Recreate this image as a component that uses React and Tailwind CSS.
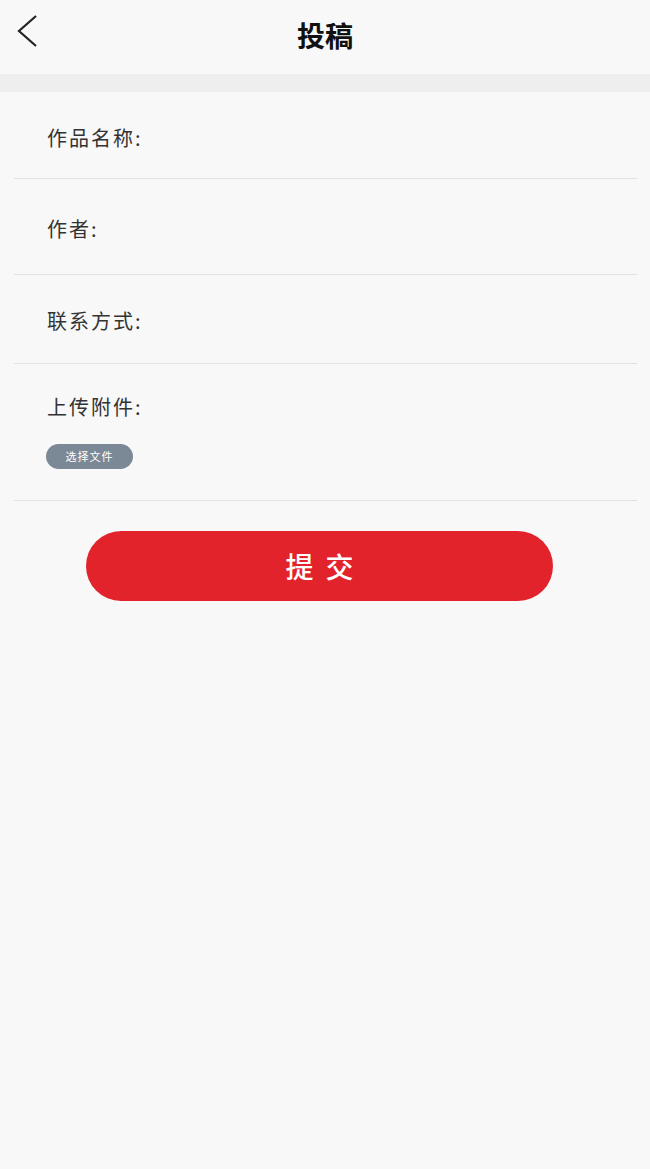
export default function App() {
  const font = { fontFamily: '"Noto Sans CJK SC", "Noto Sans", sans-serif' };
  return (
    <div className="min-h-[1169px] w-[650px] bg-[#f8f8f8]" style={font}>
      <div className="relative flex h-[74px] items-center justify-center pb-[4px]">
        <svg className="absolute left-[14px] top-[12px]" width="28" height="38" viewBox="0 0 28 38">
          <path d="M22 4 L5 19 L22 34" fill="none" stroke="#222" strokeWidth="2.2" />
        </svg>
        <h1 className="text-[28px] font-bold leading-none text-[#111]">投稿</h1>
      </div>
      <div className="h-[18px] bg-[#eeeeee]" />
      <div className="mx-[14px] mr-[13px]">
        <div className="flex h-[87px] items-end border-b border-[#e2e2e2] pb-[25px] pl-[33px]">
          <span className="text-[20px] leading-[30px] tracking-[2px] text-[#333]">作品名称:</span>
        </div>
        <div className="flex h-[96px] items-end border-b border-[#e2e2e2] pb-[30px] pl-[33px]">
          <span className="text-[20px] leading-[30px] tracking-[2px] text-[#333]">作者:</span>
        </div>
        <div className="flex h-[89px] items-end border-b border-[#e2e2e2] pb-[27px] pl-[33px]">
          <span className="text-[20px] leading-[30px] tracking-[2px] text-[#333]">联系方式:</span>
        </div>
        <div className="flex h-[137px] flex-col border-b border-[#e2e2e2] pl-[32px] pt-[28px]">
          <span className="pl-[1px] text-[20px] leading-[30px] tracking-[2px] text-[#333]">上传附件:</span>
          <button className="mt-[22px] flex h-[25px] w-[87px] items-center justify-center rounded-full bg-[#7b8895] text-[11px] tracking-[1px] text-white">
            选择文件
          </button>
        </div>
      </div>
      <div className="mt-[30px] flex justify-center">
        <button className="ml-[-11px] flex h-[70px] w-[467px] items-center justify-center rounded-full bg-[#e3232b] text-[28px] font-medium tracking-[12px] text-white">
          <span className="pl-[12px]">提交</span>
        </button>
      </div>
    </div>
  );
}
